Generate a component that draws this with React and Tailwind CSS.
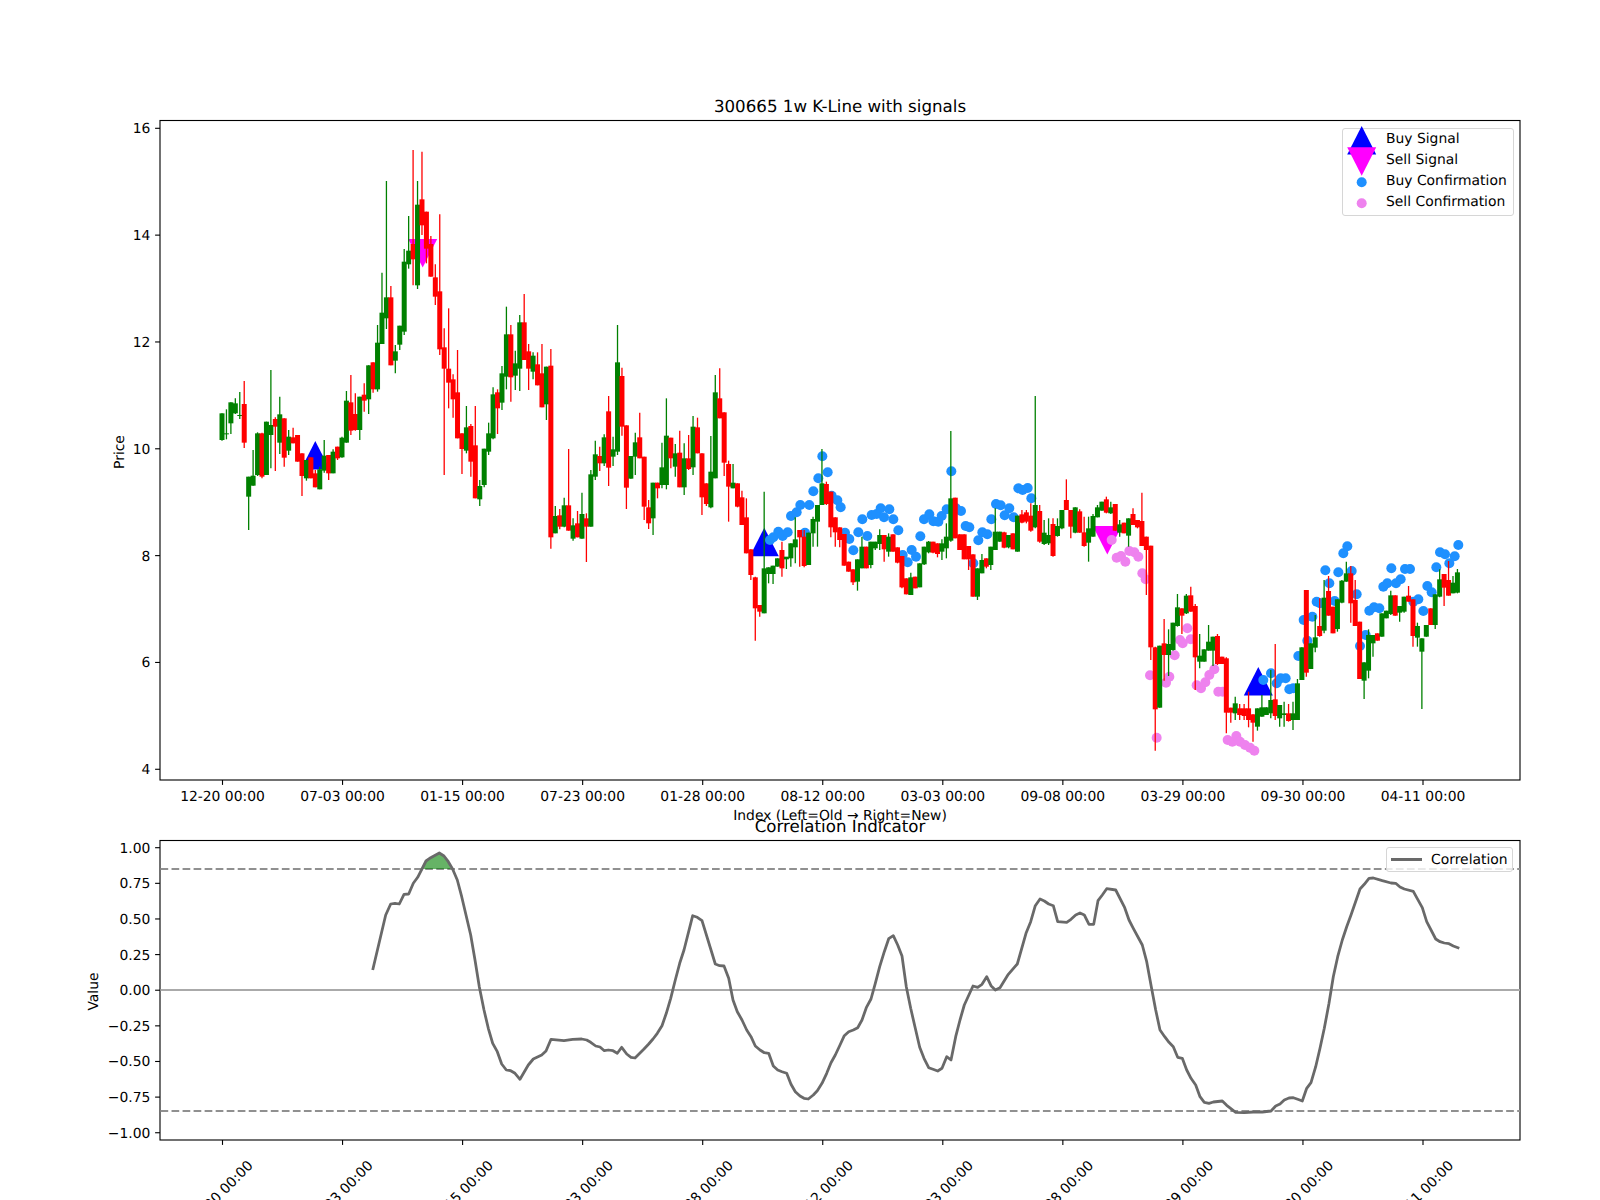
import React from 'react';

// candles: [green?, wickTop, bodyTop, bodyBottom, wickBottom], read off 3x crops (y = oy + v / 3)
const BLOCK_A = [
  [1,940,940,1020,1022],[1,928,1000,1003,1018],[1,907,907,970,1002],[1,895,910,940,942],[1,876,945,948,957],
  [0,843,912,1028,1044],[1,1130,1130,1190,1290],[1,1050,1127,1157,1157],[1,997,1000,1125,1128],[0,998,1000,1130,1135],
  [1,965,965,1125,1125],[1,810,975,1005,1105],[0,952,957,980,1113],[1,890,943,1028,1062],[0,955,955,1073,1100],
  [1,990,1010,1052,1065],[0,983,1012,1030,1030],[0,1005,1005,1085,1085],[0,1060,1060,1128,1188],[1,1080,1080,1135,1142],
  [0,1072,1072,1135,1135],[0,1110,1120,1162,1162],[1,1100,1108,1168,1168],[1,1020,1067,1112,1118],[0,1065,1065,1120,1140],
  [1,1048,1055,1120,1120],[0,1040,1040,1075,1080],[1,1010,1013,1072,1073],[1,873,902,1028,1028],[0,825,907,992,1005],
  [0,880,942,990,992],[1,890,890,990,1020],[0,850,884,902,935],[1,796,796,898,942],[0,787,787,868,878],
  [1,675,728,868,875],[1,518,638,732,732],[1,243,592,655,687],[0,558,592,796,796],[1,735,754,782,820],
  [1,677,677,734,750],[1,447,485,695,705],[1,348,452,493,506],[0,150,432,478,556],[1,243,314,556,567],
  [0,155,298,376,405],[0,335,335,446,490],[0,408,432,530,530],[0,493,532,590,615],[0,343,574,748,765],
  [0,685,742,806,1125],[0,625,806,848,925],[0,823,838,898,953],[0,750,877,1015,1015],[0,1000,1000,1047,1122],
  [1,918,982,1052,1060],[0,972,978,1085,1130],[0,918,1036,1195,1195],[1,1140,1158,1198,1218],[1,1046,1046,1155,1162],
  [1,968,1000,1055,1065],[1,862,883,1015,1018],[0,868,877,925,1002],[1,798,820,908,930],[1,620,703,830,868],
  [0,675,703,832,905],[1,752,790,827,870],[1,645,667,806,873],[0,582,667,780,780],[0,732,754,806,870],
  [1,757,767,815,838],[0,757,793,856,856],[0,732,820,922,922],[1,800,800,913,960],[0,747,797,1312,1346],
  [1,1218,1248,1300,1300],[0,1227,1246,1280,1288],[1,1193,1216,1280,1282],[0,1047,1216,1292,1292],[1,1255,1276,1316,1322],
  [0,1233,1270,1312,1312],[1,1178,1242,1316,1316],[0,1240,1255,1280,1386],[1,1110,1123,1280,1280],[1,1022,1063,1130,1140],
  [0,1040,1068,1090,1113],[1,1003,1012,1090,1098],[0,888,934,1103,1158],[1,1010,1048,1070,1098],[1,675,787,1055,1065],
  [0,803,828,980,1007],[0,976,976,1163,1227],[1,1068,1068,1136,1136],[1,998,1027,1070,1125],[0,938,1012,1075,1075],
  [0,1070,1070,1220,1260],[0,1200,1222,1270,1287],
];
const BLOCK_B = [
  [1,398,398,505,555],[0,398,398,415,445],[1,278,352,405,415],[1,145,257,405,418],[0,263,263,325,355],
  [1,282,310,350,380],[0,242,308,412,412],[1,280,325,412,435],[0,255,325,357,360],[1,198,230,352,375],
  [0,203,232,310,310],[0,310,310,442,495],[0,400,400,462,468],[1,258,365,472,475],[1,75,127,385,385],
  [0,55,145,205,205],[0,187,187,338,378],[0,332,342,410,515],[1,342,398,415,415],[0,400,400,470,472],
  [0,422,442,525,525],[0,445,502,610,610],[0,598,598,675,690],[0,680,682,775,872],[0,765,765,785,800],
  [1,425,655,790,790],[1,652,652,672,700],[1,647,647,672,702],[1,625,625,650,650],[0,575,600,655,680],
  [1,625,620,628,657],[1,580,580,625,650],[1,502,568,592,640],[0,540,540,562,650],[0,540,560,648,652],
  [1,548,548,645,645],[1,500,507,550,590],[1,465,465,515,590],[1,297,400,465,465],[0,395,402,462,465],
  [0,425,425,532,562],[0,502,502,547,590],[0,532,532,570,592],[0,552,552,647,647],[0,635,635,665,665],
  [0,658,658,697,705],[1,628,628,695,722],[1,560,590,655,655],[0,590,590,655,655],[1,575,575,645,655],
  [1,575,575,595,600],[1,538,555,582,600],[0,555,555,598,635],[1,550,560,605,620],[0,553,553,605,605],
  [0,592,592,638,640],[0,618,618,712,715],[0,685,685,733,733],[1,668,682,735,735],[0,680,680,715,715],
  [1,640,640,712,712],[1,590,590,643,645],[1,573,575,607,610],[0,575,575,608,610],[0,580,580,612,622],
  [1,568,580,605,630],[1,520,560,595,625],[1,243,445,572,575],[0,443,443,565,565],[0,553,553,600,600],
  [0,553,553,628,628],[0,588,588,628,660],[0,613,613,740,740],[1,655,655,740,750],[1,612,630,670,670],
  [0,625,625,650,655],[1,590,590,645,660],[1,475,545,600,600],[1,545,545,575,575],[0,545,547,593,595],
  [1,555,555,592,595],[0,550,550,598,598],[1,497,497,605,605],[0,480,493,518,520],[0,480,487,515,520],
  [0,460,497,542,545],[1,138,465,532,535],[0,465,483,575,578],[1,510,548,582,585],[1,505,555,580,585],
  [0,505,522,618,620],[1,505,528,558,560],[1,480,480,535,538],[0,388,450,480,480],[0,480,480,530,565],
  [1,472,472,548,550],[0,478,484,548,548],[0,500,547,588,590],[1,500,535,578,635],[1,492,498,560,560],
  [1,465,472,502,502],
];
const BLOCK_C = [
  [1,185,185,212,212],[0,170,178,218,220],[1,185,202,220,222],[0,192,192,272,272],[1,240,253,278,290],
  [0,248,248,280,280],[1,235,235,287,320],[0,205,222,255,255],[0,240,240,262,265],[0,158,243,318,318],
  [0,290,290,330,465],[0,317,317,622,660],[0,620,622,808,932],[1,617,617,803,803],[0,537,610,645,722],
  [1,568,612,645,708],[1,548,548,630,632],[1,462,502,558,560],[0,505,505,527,582],[1,462,467,520,522],
  [0,440,466,515,515],[0,492,498,652,750],[1,582,647,665,685],[1,628,628,665,665],[1,555,605,632,632],
  [1,590,590,632,678],[0,582,588,672,675],[0,650,650,672,672],
];
const BLOCK_D = [
  [0,472,475,638,700],[0,623,623,638,668],[1,590,610,640,660],[0,612,625,645,660],[0,612,625,648,660],
  [0,575,625,660,682],[0,643,643,668,725],[1,625,625,680,692],[1,585,622,650,650],[1,622,622,645,645],
  [1,510,600,640,655],[0,432,598,648,660],[1,615,615,655,680],[1,605,640,645,680],[0,612,640,663,665],
  [1,605,640,660,690],[1,537,550,660,660],[1,442,442,540,540],[0,270,270,518,530],[1,430,430,507,507],
  [1,345,412,443,457],[0,295,378,408,410],[1,240,293,392,400],[0,228,273,347,347],[0,320,320,400,400],
  [1,298,298,387,395],[1,240,242,308,310],[1,185,220,245,245],[0,198,220,310,368],[0,240,300,378,378],
  [0,365,365,537,537],[1,487,487,542,597],[1,388,405,512,535],[1,405,405,430,470],[0,400,400,422,422],
  [1,340,340,410,410],[1,332,332,355,355],[1,272,286,342,345],[0,286,286,347,347],[1,318,318,338,365],
  [1,290,290,335,338],[0,258,287,305,305],[0,298,298,408,440],[1,368,378,413,440],[1,415,415,455,627],
  [1,375,375,410,410],[0,325,325,375,375],[1,283,283,375,387],[1,208,238,290,292],[0,222,222,263,318],
  [0,183,240,287,287],[1,228,248,280,280],[1,207,217,278,280],
];

const toY = (oy) => (c) => [c[0], ...c.slice(1).map((v) => oy + v / 3)];
const CANDLES = [
  ...BLOCK_A.map(toY(100)),
  ...BLOCK_B.map(toY(350)),
  ...BLOCK_C.map(toY(440)),
  ...BLOCK_D.map(toY(500)),
];

const crop = (ox, oy, pts) => pts.map(([x, y]) => [ox + x / 3, oy + y / 3]);

const BLUE_DOTS = [
  ...crop(600, 350, [
    [510,570],[520,562],[535,545],[548,558],[563,547],[573,498],[590,487],[601,465],[628,465],[640,424],[655,385],[667,319],[683,367],
    [695,437],[712,451],[722,472],[615,548],[735,548],[748,567],[760,601],[775,547],[787,508],[802,558],[815,495],[830,492],[842,475],
    [852,502],[868,478],[880,508],[895,541],[908,615],[923,637],[935,600],[948,620],[961,559],[972,508],[988,493],[1000,514],[1015,515],
    [1025,498],[1040,478],[1054,364],[1068,475],[1083,483],[1097,528],[1108,532],[1120,640],[1135,571],[1147,547],[1162,553],[1174,508],
    [1188,462],[1202,466],[1214,496],[1228,475],[1241,502],[1255,415],[1268,420],[1283,414],[1294,445],
  ]),
  ...crop(1100, 500, [
    [490,540],[513,520],[530,550],[542,535],[557,535],[568,568],[580,565],[595,468],[611,360],[622,422],[637,350],[650,305],[660,310],
    [676,211],[688,250],[704,303],[715,217],[730,160],[742,139],[755,213],[770,283],[780,438],[797,405],[808,332],[822,322],[838,325],
    [850,260],[862,250],[874,205],[888,250],[902,238],[915,207],[930,207],[940,305],[955,298],[970,333],[982,258],[995,277],[1009,202],
    [1020,157],[1035,163],[1048,190],[1064,169],[1075,135],
  ]),
];

const VIOLET_DOTS = [
  ...crop(1000, 440, [[335,300],[350,353],[363,348],[376,365],[388,333],[403,337],[415,350],[427,400],[437,418]]),
  ...crop(1100, 500, [
    [150,526],[170,713],[198,548],[208,530],[224,466],[240,420],[248,430],[262,385],[272,418],[290,556],[303,565],[316,547],[328,525],
    [343,508],[355,575],[368,575],[383,720],[397,725],[409,708],[420,725],[435,735],[450,743],[463,752],
  ]),
];

const CORR_LINE = [
  ...crop(60, 780, [
    [938,570],[977,405],[992,372],[1005,370],[1018,372],[1032,343],[1046,342],[1060,310],[1073,292],[1098,243],[1112,233],[1138,219],
    [1152,228],[1165,245],[1178,268],[1192,300],[1205,350],[1232,465],[1245,540],[1258,620],[1272,690],[1285,745],[1298,790],[1312,815],
    [1325,852],[1339,870],[1352,872],[1365,880],
  ]),
  ...crop(500, 840, [
    [60,718],[85,675],[100,657],[125,645],[138,633],[153,598],[192,602],[218,598],[245,597],[260,600],[272,607],[287,618],[300,621],
    [313,632],[325,630],[339,632],[352,640],[365,622],[380,642],[393,652],[405,654],[432,627],[446,612],[459,597],[472,580],[486,557],
    [499,520],[512,475],[526,420],[539,370],[552,330],[578,227],[592,232],[606,242],[632,327],[646,372],[659,377],[672,378],[686,415],
    [699,480],[712,515],[726,540],[740,570],[753,590],[766,618],[780,630],[793,638],[806,640],[820,678],[833,690],[846,695],[860,700],
    [873,733],[886,755],[900,768],[912,775],[925,777],[940,765],[952,752],[966,730],[980,700],[993,668],[1006,645],[1020,615],[1033,587],
    [1046,575],[1060,570],[1073,563],[1086,540],[1099,503],[1113,477],[1126,430],[1139,380],[1153,335],[1166,296],[1180,287],[1193,315],
    [1206,348],[1219,440],[1232,505],[1246,565],[1259,622],[1272,655],[1286,683],[1299,688],[1313,693],[1326,685],[1340,650],[1353,660],
    [1367,590],[1380,540],[1393,495],[1419,438],[1433,442],[1446,433],[1460,410],[1473,437],[1486,450],
  ]),
  ...crop(1000, 840, [
    [0,443],[25,403],[52,372],[78,280],[92,245],[106,197],[120,177],[133,183],[146,192],[160,197],[173,245],[200,247],[213,238],[227,225],
    [240,219],[253,225],[267,253],[281,253],[294,182],[307,165],[320,146],[347,150],[374,203],[387,240],[400,265],[427,315],[440,365],
    [454,440],[467,510],[480,570],[494,590],[507,607],[520,620],[533,652],[547,655],[560,690],[573,715],[587,735],[600,770],[613,787],
    [627,790],[640,786],[667,783],[680,796],[707,817],[733,818],[760,816],[787,816],[813,813],[827,798],[840,792],[853,780],[867,774],
    [880,773],[893,778],[907,783],[920,745],[933,728],[947,680],[960,625],[973,565],[987,490],[1000,410],[1013,350],[1027,300],[1040,260],
    [1053,225],[1080,147],[1093,133],[1107,115],[1120,114],[1147,122],[1173,129],[1187,130],[1200,141],[1213,147],[1240,154],[1253,178],
    [1267,203],[1280,245],[1307,297],[1320,305],[1333,309],[1347,311],[1360,318],[1378,325],
  ]),
];

const CORR_FILL = crop(60, 780, [[1088,267],[1098,243],[1112,233],[1138,219],[1152,228],[1165,245],[1172,267]]);

const TICK_LABELS = ['12-20', '07-03', '01-15', '07-23', '01-28', '08-12', '03-03', '09-08', '03-29', '09-30', '04-11'];
const tickX = (i) => 222.5 + i * 120.05;

const PRICE_TICKS = [16, 14, 12, 10, 8, 6, 4].map((v, i) => ({ label: String(v), y: 128.3 + i * 106.83 }));
const CORR_TICKS = ['1.00', '0.75', '0.50', '0.25', '0.00', '−0.25', '−0.50', '−0.75', '−1.00'].map((label, i) => ({
  label,
  y: 847.7 + i * 35.63,
}));

const asPoints = (pts) => pts.map(([x, y]) => `${x.toFixed(1)},${y.toFixed(1)}`).join(' ');

function Axes({ top, bottom, yTicks }) {
  return (
    <>
      <rect x="160" y={top} width="1360" height={bottom - top} fill="none" stroke="#000" strokeWidth="1.11" />
      {TICK_LABELS.map((_, i) => (
        <line key={i} x1={tickX(i)} x2={tickX(i)} y1={bottom} y2={bottom + 4.9} stroke="#000" strokeWidth="1.11" />
      ))}
      {yTicks.map((t) => (
        <g key={t.label}>
          <line x1="155.1" x2="160" y1={t.y} y2={t.y} stroke="#000" strokeWidth="1.11" />
          <text x="150.4" y={t.y + 5} textAnchor="end" className="text-[13.89px]" fill="#000">
            {t.label}
          </text>
        </g>
      ))}
    </>
  );
}

function Triangle({ x, y, up, color }) {
  const d = up ? `M${x} ${y}L${x + 14.5} ${y + 28.5}L${x - 14.5} ${y + 28.5}Z` : `M${x - 14.5} ${y}L${x + 14.5} ${y}L${x} ${y + 28.5}Z`;
  return <path d={d} fill={color} />;
}

function Legend() {
  return (
    <div className="absolute left-[1342px] top-[127.5px] w-[171.5px] h-[88.5px] rounded-[3px] border-[1.4px] border-[#d6d6d6] bg-white/80 text-[13.89px] leading-[21px] text-black pl-[43px]">
      <div>Buy Signal</div>
      <div>Sell Signal</div>
      <div>Buy Confirmation</div>
      <div>Sell Confirmation</div>
      <svg className="absolute left-[-1343.4px] top-[-128.9px] overflow-visible" width="1" height="1">
        <Triangle x={1361.7} y={126} up color="#0000ff" />
        <Triangle x={1361.7} y={147.3} color="#ff00ff" />
        <circle cx="1361.7" cy="182.3" r="5" fill="#1e90ff" />
        <circle cx="1361.7" cy="203.3" r="5" fill="#ee82ee" />
      </svg>
    </div>
  );
}

function PricePanel() {
  return (
    <div className="relative h-[800px] shrink-0">
      <svg width="1600" height="800" viewBox="0 0 1600 800" className="block overflow-visible">
        <text x="840" y="112" textAnchor="middle" className="text-[16.67px]" fill="#000">
          300665 1w K-Line with signals
        </text>
        <Axes top={120.5} bottom={780} yTicks={PRICE_TICKS} />
        {TICK_LABELS.map((d, i) => (
          <text key={d} x={tickX(i)} y="801" textAnchor="middle" className="text-[13.89px]" fill="#000">
            {d} 00:00
          </text>
        ))}
        <text x="840" y="820" textAnchor="middle" className="text-[13.89px]" fill="#000">
          Index (Left=Old → Right=New)
        </text>
        <text x="120" y="452" textAnchor="middle" transform="rotate(-90 120 452)" dominantBaseline="central" className="text-[13.89px]" fill="#000">
          Price
        </text>

        <Triangle x={315.3} y={441} up color="#0000ff" />
        <Triangle x={764.3} y={527.7} up color="#0000ff" />
        <Triangle x={1258.3} y={667} up color="#0000ff" />
        <Triangle x={422.7} y={239} color="#ff00ff" />
        <Triangle x={1107.3} y={526} color="#ff00ff" />

        {BLUE_DOTS.map(([x, y], i) => (
          <circle key={i} cx={x} cy={y} r="5" fill="#1e90ff" />
        ))}
        {VIOLET_DOTS.map(([x, y], i) => (
          <circle key={i} cx={x} cy={y} r="5" fill="#ee82ee" />
        ))}

        {CANDLES.map(([green, wt, bt, bb, wb], i) => {
          const x = 222 + i * 4.444;
          const color = green ? '#008000' : '#ff0000';
          return (
            <g key={i}>
              <line x1={x} x2={x} y1={wt} y2={wb} stroke={color} strokeWidth="1.3" />
              <rect x={x - 2.5} y={bt} width="5" height={bb - bt} fill={color} />
            </g>
          );
        })}
      </svg>
      <Legend />
    </div>
  );
}

function CorrLegend() {
  return (
    <div className="absolute left-[1385.7px] top-[47.3px] w-[127.8px] h-[25px] rounded-[3px] border-[1.4px] border-[#d6d6d6] bg-white/80 text-[13.89px] leading-[24px] text-black pl-[44.4px]">
      Correlation
      <div className="absolute left-[4px] top-[10px] w-[31px] h-[3px] bg-[#696969]" />
    </div>
  );
}

function CorrPanel() {
  return (
    <div className="relative h-[400px] shrink-0">
      <svg width="1600" height="400" viewBox="0 800 1600 400" className="block overflow-visible">
        <text x="840" y="832" textAnchor="middle" className="text-[16.67px]" fill="#000">
          Correlation Indicator
        </text>
        <Axes top={840.5} bottom={1140} yTicks={CORR_TICKS} />
        {TICK_LABELS.map((d, i) => (
          <text key={d} textAnchor="middle" dominantBaseline="central" transform={`translate(${tickX(i) - 1.5} 1193.5) rotate(-45)`} className="text-[13.89px]" fill="#000">
            {d} 00:00
          </text>
        ))}
        <text x="94" y="991.5" textAnchor="middle" transform="rotate(-90 94 991.5)" dominantBaseline="central" className="text-[13.89px]" fill="#000">
          Value
        </text>

        <line x1="160.5" x2="1520" y1="990" y2="990" stroke="#aaaaaa" strokeWidth="2" />
        <line x1="160.5" x2="1520" y1="869" y2="869" stroke="#909090" strokeWidth="2.08" strokeDasharray="7.7 3.33" />
        <line x1="160.5" x2="1520" y1="1111" y2="1111" stroke="#909090" strokeWidth="2.08" strokeDasharray="7.7 3.33" />
        <polygon points={asPoints(CORR_FILL)} fill="#008000" fillOpacity="0.6" />
        <polyline points={asPoints(CORR_LINE)} fill="none" stroke="#696969" strokeWidth="2.78" strokeLinejoin="round" />
      </svg>
      <CorrLegend />
    </div>
  );
}

export default function App() {
  return (
    <div className="w-[1600px] h-[1200px] overflow-hidden bg-white font-['DejaVu_Sans',sans-serif] [text-rendering:geometricPrecision] flex flex-col">
      <PricePanel />
      <CorrPanel />
    </div>
  );
}
